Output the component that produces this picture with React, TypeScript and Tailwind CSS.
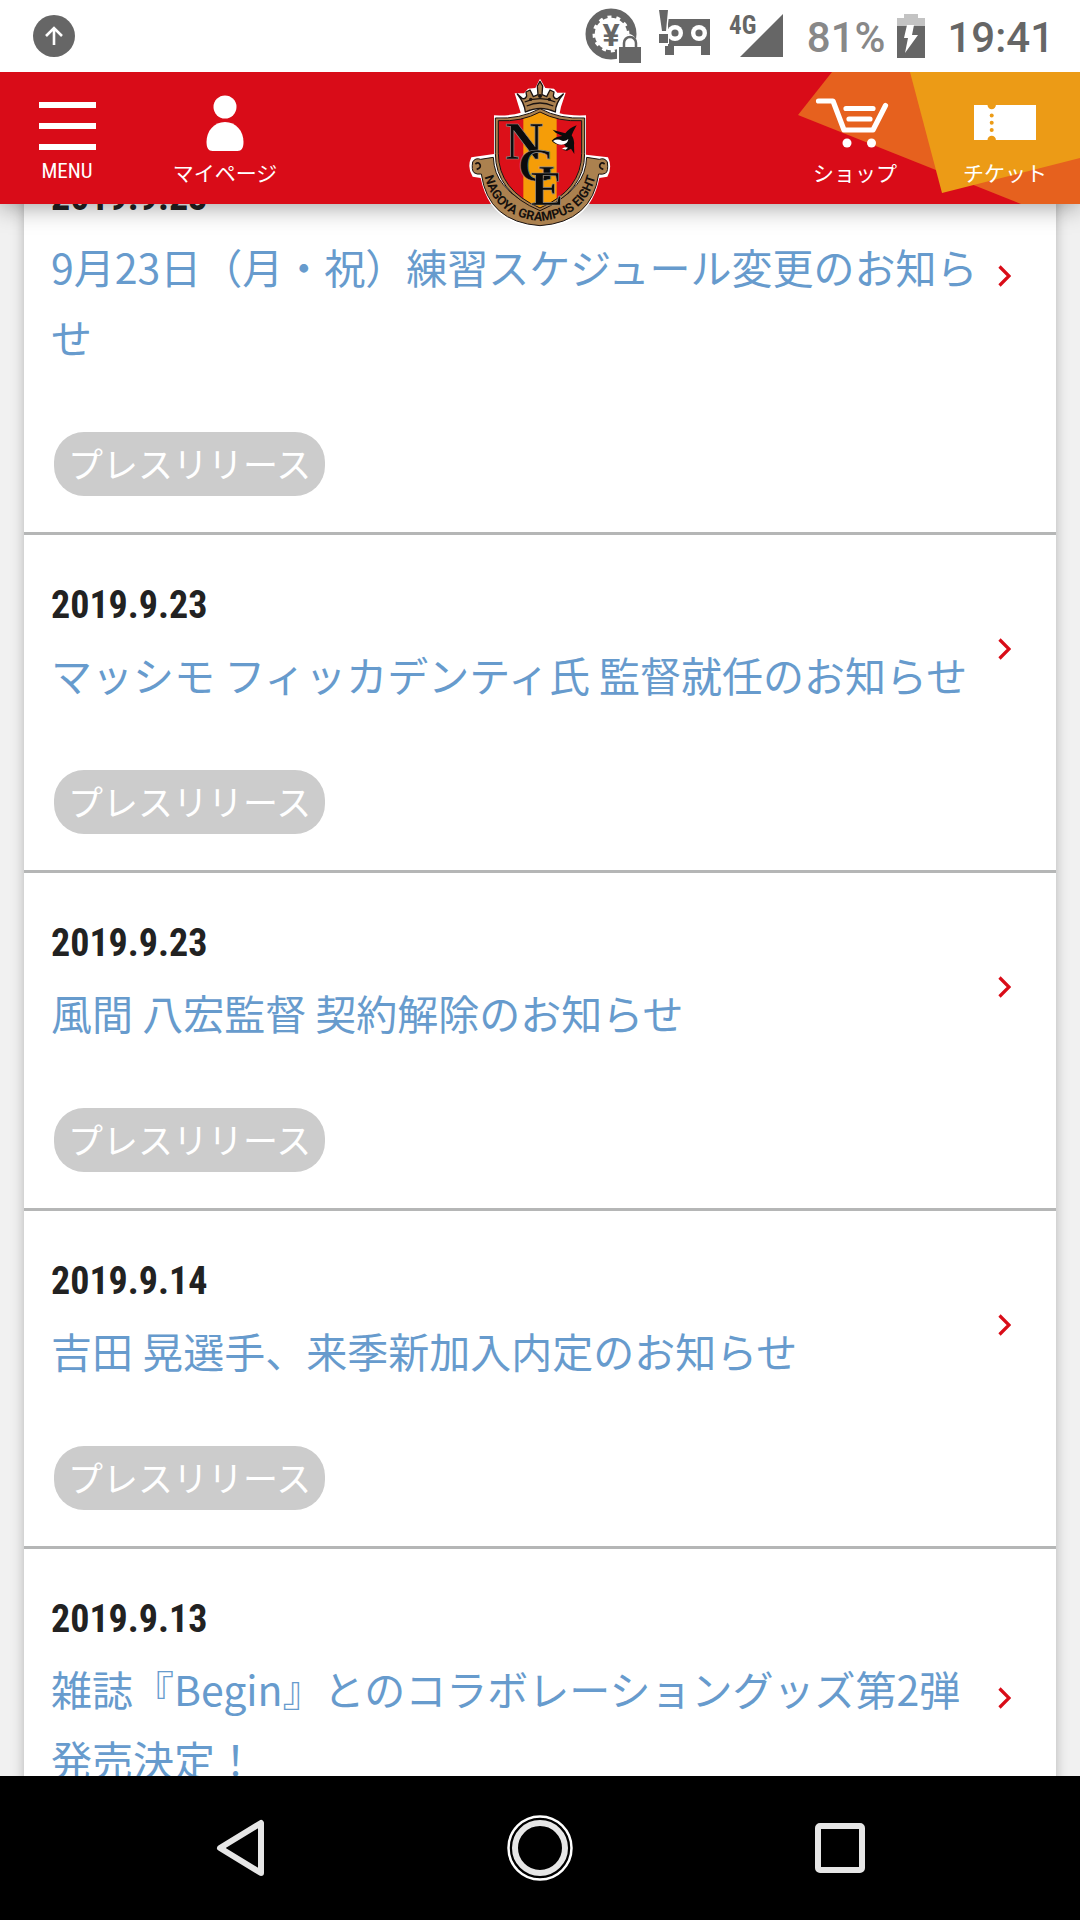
import React from "react";

const news = [
  {
    date: "2019.9.23",
    title: "9月23日（月・祝）練習スケジュール変更のお知らせ",
    tag: "プレスリリース",
  },
  {
    date: "2019.9.23",
    title: "マッシモ フィッカデンティ氏 監督就任のお知らせ",
    tag: "プレスリリース",
  },
  {
    date: "2019.9.23",
    title: "風間 八宏監督 契約解除のお知らせ",
    tag: "プレスリリース",
  },
  {
    date: "2019.9.14",
    title: "吉田 晃選手、来季新加入内定のお知らせ",
    tag: "プレスリリース",
  },
  {
    date: "2019.9.13",
    title: "雑誌『Begin』とのコラボレーショングッズ第2弾発売決定！",
    tag: "プレスリリース",
  },
];

const StatusBar = () => {
  return (
    <div className="relative z-20 flex h-[72px] shrink-0 items-center justify-between bg-white pl-[33px] pr-[26px] font-[Roboto,sans-serif] text-[#666]">
      <svg width="42" height="42" viewBox="0 0 42 42">
        <circle cx="21" cy="21" r="21" fill="#666" />
        <path
          d="M21 30V14M13 21l8-8 8 8"
          fill="none"
          stroke="#fff"
          strokeWidth="2.6"
        />
      </svg>
      <div className="flex items-center">
        <svg width="58" height="56" viewBox="0 0 58 56">
          <circle cx="26" cy="26" r="22" fill="none" stroke="#666" strokeWidth="7" />
          <circle
            cx="26"
            cy="26"
            r="18"
            fill="none"
            stroke="#666"
            strokeWidth="3.5"
            strokeDasharray="5.2 4.22"
          />
          <text
            x="26"
            y="38"
            textAnchor="middle"
            fontSize="32"
            fontWeight="700"
            fill="#666"
          >
            ¥
          </text>
          <path d="M32 56V37h4v-6q8-10 15 0h7v25z" fill="#fff" />
          <path
            d="M39 40v-5a6 6 0 0 1 12 0v5"
            fill="none"
            stroke="#666"
            strokeWidth="2.5"
          />
          <path d="M34 39h22v16H34z" fill="#666" />
        </svg>
        <svg className="ml-[15px]" width="52" height="56" viewBox="0 0 52 56">
          <path d="M10 11h42v36h-9v-9H16v9H7v-9h3z" fill="#666" />
          <circle cx="17" cy="25" r="8" fill="#fff" />
          <circle cx="41" cy="25" r="8" fill="#fff" />
          <circle cx="17" cy="25" r="3.6" fill="#666" />
          <circle cx="41" cy="25" r="3.6" fill="#666" />
          <path d="M0 0h12L9 24h2v12H0z" fill="#fff" />
          <path d="M1 2h9L8 23H4zM1 26h9v9H1z" fill="#666" />
        </svg>
        <svg className="ml-[18px]" width="55" height="44" viewBox="0 0 55 44">
          <path d="M55 0v43H12z" fill="#666" />
          <text
            x="1"
            y="20"
            fontSize="25"
            fontWeight="700"
            fill="#666"
            fontFamily="'Roboto Condensed',Roboto"
          >
            4G
          </text>
        </svg>
        <span className="ml-[24px] pt-[3px] text-[42px] font-medium leading-[48px] text-[#888]">
          81%
        </span>
        <svg className="ml-[12px]" width="28" height="44" viewBox="0 0 28 44">
          <path d="M7 0h14v4h7v8H0V4h7z" fill="#c3c3c3" />
          <path d="M0 12h28v32H0z" fill="#666" />
          <path d="M10 11h7l-2 10h6L8 39l3-15H7z" fill="#fff" />
        </svg>
        <span className="ml-[22px] pt-[3px] text-[42px] font-medium leading-[48px]">
          19:41
        </span>
      </div>
    </div>
  );
};

const Crest = () => {
  return (
    <svg
      width="150"
      height="153"
      viewBox="15 18 450 459"
      role="img"
      aria-label="NAGOYA GRAMPUS EIGHT"
    >
      <defs>
        <clipPath id="shield">
          <path d="M115 152q70 4 125-26 55 30 125 26v98q0 110-125 164Q115 360 115 250z" />
        </clipPath>
        <path id="ribbonText" d="M68 290Q88 440 240 453 392 440 412 290" />
      </defs>
      {/* white outline */}
      <path
        d="M240 26l16 28 26 2 10 12 25 0-14 42-4 20q30 8 79 6v118l66 8q14 30-2 58l-24 4Q390 466 240 472 90 466 62 324l-24-4q-18-28-4-58l68-10V136q50 2 80-8l-18-58 28 0 12-14 22-2z"
        fill="#fff"
      />
      {/* ribbon */}
      <path
        d="M38 276q8-14 24-8l38-6q2 50 30 82 42 54 110 64 68-10 110-64 28-32 30-82l38 6q16-6 24 8 4 28-6 34-8 4-20 2Q396 456 240 467 84 456 64 312q-14 2-22-4-8-8-4-32z"
        fill="#ab814f"
        stroke="#1a1210"
        strokeWidth="3"
      />
      <path
        d="M46 282q10-8 14 2t-10 14M434 282q-10-8-14 2t10 14"
        fill="none"
        stroke="#1a1210"
        strokeWidth="5"
      />
      <text fontFamily="Roboto,sans-serif" fontWeight="700" fontSize="38" fill="#15100d">
        <textPath href="#ribbonText" startOffset="50%" textAnchor="middle">
          NAGOYA GRAMPUS EIGHT
        </textPath>
      </text>
      {/* shield */}
      <path
        d="M106 144q74 4 134-28 60 32 134 28v106q0 116-134 172Q106 366 106 250z"
        fill="#ab814f"
        stroke="#1a1210"
        strokeWidth="3"
      />
      <g clipPath="url(#shield)">
        <path d="M105 110h270v320H105z" fill="#dc1019" />
        <path d="M190 110h100v320H190z" fill="#f59d08" />
      </g>
      <path
        d="M115 152q70 4 125-26 55 30 125 26v98q0 110-125 164Q115 360 115 250z"
        fill="none"
        stroke="#1a1210"
        strokeWidth="3"
      />
      {/* crown */}
      <path
        d="M196 126q-2-26-24-54l16 14q8 2 12-8l-2-12 12-6 10 20 14-6-2-26 8-14 8 14-2 26 14 6 10-20 12 6-2 12q4 10 12 8l18-14q-24 28-24 54-44-22-90 0z"
        fill="#ab814f"
        stroke="#1a1210"
        strokeWidth="4"
        strokeLinejoin="round"
      />
      <path
        d="M200 108q40-18 80 0M194 96q46-20 92 0"
        fill="none"
        stroke="#1a1210"
        strokeWidth="4"
      />
      <g fill="#1a1210">
        <circle cx="212" cy="88" r="5" />
        <circle cx="240" cy="78" r="6" />
        <circle cx="268" cy="88" r="5" />
      </g>
      {/* orca */}
      <path
        d="M275 212q12-13 32-14l-20-10-9-9 12 4 26 7q12-16 34-24-10 17-15 30 9 14 7 30l1 26-10-16-12 6-12-2 9-9-6-8q-24 5-37-11z"
        fill="#0b0b0b"
      />
      <path d="M279 213q14-8 27-1 10 3 19-5-2 13-13 16-18 4-33-10z" fill="#fff" />
      <path d="M306 236q10-6 18-3l-7 6z" fill="#fff" />
      {/* monogram */}
      <g
        fontFamily="'Liberation Serif',serif"
        fontWeight="700"
        fill="#0b0b0b"
        stroke="#8f8b88"
        strokeWidth="2"
      >
        <text x="136" y="266" fontSize="158">
          N
        </text>
        <text x="174" y="334" fontSize="142">
          G
        </text>
        <text x="212" y="406" fontSize="146">
          E
        </text>
      </g>
    </svg>
  );
};

const Header = () => {
  const label =
    "mt-[3px] text-[21px] leading-8 font-['Noto_Sans_CJK_JP',sans-serif] whitespace-nowrap";

  return (
    <header className="relative z-10 flex h-[132px] shrink-0 justify-between bg-[#d90c18] text-white shadow-[0_2px_24px_rgba(0,0,0,0.4)]">
      <svg
        className="absolute right-0 top-0"
        width="300"
        height="132"
        viewBox="0 0 300 132"
      >
        <path d="M52 0L18 43l223 89h59V0z" fill="#e6611e" />
        <path d="M130 0l32 121 138-35V0z" fill="#ec9b16" />
      </svg>
      <nav className="flex">
        <button className="flex w-[134px] cursor-pointer flex-col items-center pt-[21px]">
          <svg width="58" height="60" viewBox="0 0 58 60">
            <path d="M1 9h57v6H1zM1 30h57v6H1zM1 51h57v6H1z" fill="#fff" />
          </svg>
          <span className="mt-1 font-['Roboto_Condensed',Roboto,sans-serif] text-[21px] leading-7">
            MENU
          </span>
        </button>
        <a href="#" className="flex w-[182px] flex-col items-center pt-[21px]">
          <svg width="38" height="60" viewBox="0 0 38 60">
            <circle cx="19" cy="14" r="11.5" fill="#fff" />
            <path
              d="M19 29c11 0 18.500 9 18.500 20 0 6-2 9-6 9h-25c-4 0-6-3-6-9C.5 38 8 29 19 29z"
              fill="#fff"
            />
          </svg>
          <span className={label}>マイページ</span>
        </a>
      </nav>
      <a href="#" className="absolute left-1/2 top-1 -translate-x-1/2">
        <Crest />
      </a>
      <nav className="relative flex">
        <a href="#" className="flex w-[150px] flex-col items-center pt-[21px]">
          <svg width="80" height="60" viewBox="0 0 80 60">
            <g
              fill="none"
              stroke="#fff"
              strokeWidth="5.2"
              strokeLinecap="round"
              strokeLinejoin="round"
            >
              <path d="M3.500 8H18l11 29h29L70.500 12.500" />
              <path d="M31 15.500h27M34 26h21" />
            </g>
            <circle cx="32" cy="50" r="4.5" fill="#fff" />
            <circle cx="56.5" cy="50" r="4.5" fill="#fff" />
          </svg>
          <span className={label}>ショップ</span>
        </a>
        <a href="#" className="flex w-[150px] flex-col items-center pt-[21px]">
          <svg width="62" height="60" viewBox="0 0 62 60">
            <path
              d="M0 12h13.500a4.200 4.200 0 0 0 8.400 0H62v35H21.900a4.200 4.200 0 0 0-8.400 0H0z"
              fill="#fff"
            />
            <g fill="#ec9b16">
              <circle cx="17.7" cy="22.5" r="2" />
              <circle cx="17.7" cy="29.7" r="2" />
              <circle cx="17.7" cy="37" r="2" />
            </g>
          </svg>
          <span className={label}>チケット</span>
        </a>
      </nav>
    </header>
  );
};

const NewsItem = ({ date, title, tag }: (typeof news)[number]) => {
  return (
    <li className="border-b-3 border-[#b5b6b6] py-9 pl-[27px] pr-[45px]">
      <a href="#" className="flex items-center gap-4">
        <div className="flex-1 pb-[18px]">
          <time className="block font-['Roboto_Condensed',Roboto,sans-serif] text-[38px] font-bold leading-[68px] text-[#222]">
            {date}
          </time>
          <p className="text-[41px] leading-[70px] text-[#679bcd]">{title}</p>
        </div>
        <svg width="13" height="22" viewBox="0 0 13 22">
          <path
            d="M1.500 1.500L11 11l-9.500 9.500"
            fill="none"
            stroke="#d90c18"
            strokeWidth="3.2"
          />
        </svg>
      </a>
      <span className="ml-[3px] mt-[43px] block w-fit rounded-[30px] bg-[#ccc] px-[14px] pb-[2px] text-[35px] leading-[62px] text-white">
        {tag}
      </span>
    </li>
  );
};

const NavBar = () => {
  return (
    <div className="grid h-36 shrink-0 grid-cols-3 items-center justify-items-center bg-black px-[90px]">
      <button aria-label="Back">
        <svg width="48" height="58" viewBox="0 0 48 58">
          <path
            d="M45 4v50L4 29z"
            fill="none"
            stroke="#e6e6e6"
            strokeWidth="6"
            strokeLinejoin="round"
          />
        </svg>
      </button>
      <button aria-label="Home">
        <svg width="66" height="66" viewBox="0 0 66 66">
          <circle cx="33" cy="33" r="31.5" fill="none" stroke="#fff" strokeWidth="2.5" />
          <circle cx="33" cy="33" r="25" fill="none" stroke="#e6e6e6" strokeWidth="6" />
        </svg>
      </button>
      <button aria-label="Recent apps">
        <svg width="50" height="50" viewBox="0 0 50 50">
          <rect
            x="3"
            y="3"
            width="44"
            height="44"
            rx="2"
            fill="none"
            stroke="#e6e6e6"
            strokeWidth="6"
          />
        </svg>
      </button>
    </div>
  );
};

const App = () => {
  return (
    <div className="flex h-screen flex-col bg-[#f1f1f1] font-['Noto_Sans_CJK_JP',sans-serif]">
      <StatusBar />
      <Header />
      <main className="min-h-0 flex-1 overflow-hidden px-6">
        {/* list is scrolled a little under the header */}
        <ul className="-mt-[77px] bg-white shadow-[0_0_12px_rgba(0,0,0,0.25)]">
          {news.map((item, i) => (
            <NewsItem key={i} {...item} />
          ))}
        </ul>
      </main>
      <NavBar />
    </div>
  );
};

export default App;
